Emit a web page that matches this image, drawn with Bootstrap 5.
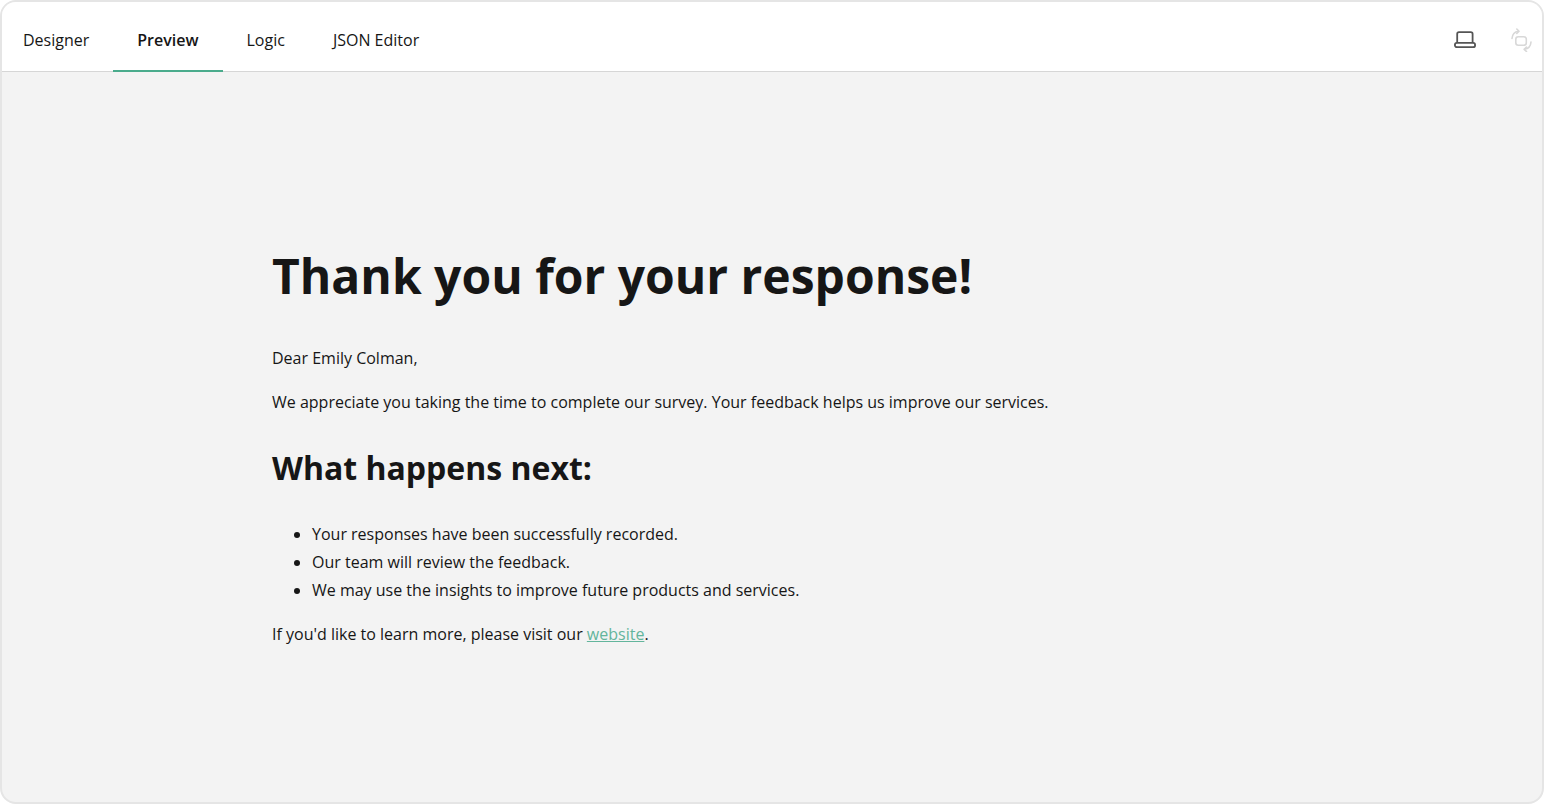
<!DOCTYPE html>
<html lang="en">
<head>
<meta charset="utf-8">
<title>Preview</title>
<link href="https://cdn.jsdelivr.net/npm/bootstrap@5.3.0/dist/css/bootstrap.min.css" rel="stylesheet">
<style>
html, body { height: 100%; }
body { font-family: "Open Sans", sans-serif; font-size: 16px; color: #161616; background: #fff; }
.app-frame { height: 804px; border: 2px solid #e5e5e5; border-radius: 16px; overflow: hidden; background: #f3f3f3; }
.top-bar { height: 70px; padding-top: 8px; background: #fff; border-bottom: 1px solid #d6d6d6; }
.tab-link { height: 62px; margin-bottom: -1px; padding: 0 24px; color: #161616; text-decoration: none; display: flex; align-items: center; line-height: 24px; border-bottom: 2px solid transparent; }
.tab-link.is-on { font-weight: 600; border-bottom-color: #4aab8c; }
.tab-strip { margin-left: -3px; }
.tool-icon { width: 24px; height: 24px; display: block; }
.tools { padding-right: 9px; gap: 32px; margin-top: -1px; }
.doc-body { padding: 174px 0 0 270px; line-height: 28px; }
.doc-body h1 { font-size: 48px; font-weight: 700; line-height: 60px; margin: 0 0 38px; }
.doc-body h2 { font-size: 32px; font-weight: 700; line-height: 40px; margin: 32px 0 32px; }
.doc-body p { margin: 0 0 16px; }
.doc-body ul { margin: 0 0 16px; padding-left: 40px; }
.doc-body a { color: #63b59c; }
</style>
</head>
<body>
<div class="app-frame d-flex flex-column">
  <header class="top-bar d-flex align-items-center justify-content-between">
    <nav class="tab-strip d-flex">
      <a class="tab-link" href="#">Designer</a>
      <a class="tab-link is-on" href="#">Preview</a>
      <a class="tab-link" href="#">Logic</a>
      <a class="tab-link" href="#">JSON Editor</a>
    </nav>
    <div class="tools d-flex align-items-center">
      <svg class="tool-icon" viewBox="0 0 24 24" fill="none" stroke="#555" stroke-width="1.800"><path d="M4.200 15V6A1.800 1.800 0 0 1 6 4.200h11.800A1.800 1.800 0 0 1 19.600 6V15"/><rect x="1.900" y="14.900" width="20.200" height="4.300" rx="2"/></svg>
      <svg class="tool-icon" viewBox="0 0 24 24" fill="none" stroke="#d8d8d8" stroke-width="1.600" stroke-linecap="round" stroke-linejoin="round"><rect x="6.800" y="8.800" width="10.500" height="8.500" rx="2.500"/><path d="M3 10.500C3.300 6.500 5.800 3.800 9.500 3.300"/><path d="M7.800 1 10 3.300 7.800 5.500"/><path d="M22 14C21.700 18 19 20.800 15.500 21.300"/><path d="M17.500 19 15.200 21.300 17.500 23.500"/></svg>
    </div>
  </header>
  <main class="doc-body flex-grow-1">
    <h1>Thank you for your response!</h1>
    <p>Dear Emily Colman,</p>
    <p>We appreciate you taking the time to complete our survey. Your feedback helps us improve our services.</p>
    <h2>What happens next:</h2>
    <ul>
      <li>Your responses have been successfully recorded.</li>
      <li>Our team will review the feedback.</li>
      <li>We may use the insights to improve future products and services.</li>
    </ul>
    <p>If you'd like to learn more, please visit our <a href="#">website</a>.</p>
  </main>
</div>
<script src="https://cdn.jsdelivr.net/npm/bootstrap@5.3.0/dist/js/bootstrap.bundle.min.js"></script>
</body>
</html>
